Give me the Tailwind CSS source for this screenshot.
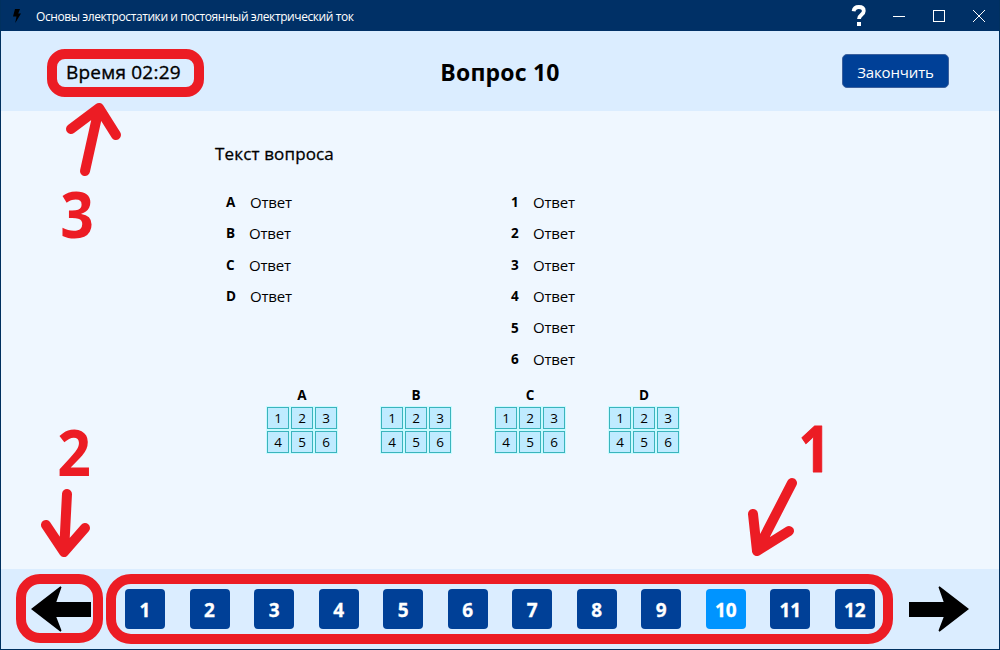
<!DOCTYPE html>
<html lang="ru">
<head>
<meta charset="utf-8">
<title>Основы электростатики и постоянный электрический ток</title>
<script src="https://cdn.jsdelivr.net/npm/@tailwindcss/browser@4"></script>
</head>
<body class="w-[1000px] h-[650px] overflow-hidden">
<div class="relative w-[1000px] h-[650px] flex flex-col bg-[#eff7ff] border-x border-b border-[#00305f] font-['Open_Sans','Noto_Sans',sans-serif] text-black">
  <header class="h-[31px] shrink-0 flex items-center bg-[#003066] text-white">
    <svg class="ml-[11px] mt-px w-[10px] h-[14px]" viewBox="0 0 10 14"><path d="M3 0h5L6.2 4.4H9L3.2 14 4.5 7.5H1z" fill="#000"/></svg>
    <h1 class="ml-[14px] mt-[2px] text-[12px] tracking-[-0.41px] whitespace-nowrap">Основы электростатики и постоянный электрический ток</h1>
    <div class="ml-auto flex items-center">
      <svg class="w-[16px] h-[22px] mr-[26px]" viewBox="0 0 16 22"><path d="M2.6 6.2C3 3.2 5 2 7.8 2c3 0 5 1.5 5 4 0 3.9-4.8 3.7-4.8 8" fill="none" stroke="#fff" stroke-width="3.8"/><rect x="6" y="17" width="4" height="4" fill="#fff"/></svg>
      <svg class="w-[12px] h-[12px] mr-[28px]" viewBox="0 0 12 12"><path d="M0 6.5h12" stroke="#fff"/></svg>
      <svg class="w-[12px] h-[12px] mr-[28px]" viewBox="0 0 12 12"><rect x=".5" y=".5" width="11" height="11" fill="none" stroke="#fff"/></svg>
      <svg class="w-[12px] h-[12px] mr-[14px]" viewBox="0 0 12 12"><path d="M0 0l12 12M12 0L0 12" stroke="#fff"/></svg>
    </div>
  </header>

  <section class="h-[80px] shrink-0 grid grid-cols-[1fr_auto_1fr] items-center bg-[#dbedff] px-[50px] pt-[1px]">
    <div class="pl-[15px] text-[19px] tracking-[0.22px] [-webkit-text-stroke:0.35px_black] whitespace-nowrap pt-px">Время 02:29</div>
    <h2 class="text-[23px] tracking-[0.2px] font-bold whitespace-nowrap pt-[2px]">Вопрос 10</h2>
    <button class="justify-self-end w-[107px] h-[34px] mb-px rounded-[5px] border border-[#3c609c] bg-[#004097] text-white text-[15px] tracking-[-0.15px] pt-[3px]">Закончить</button>
  </section>

  <main class="flex-1 flex flex-col">
    <h3 class="ml-[214px] mt-[30px] h-[26px] leading-[26px] text-[17px] tracking-[0.15px] [-webkit-text-stroke:0.3px_black] whitespace-nowrap">Текст вопроса</h3>
    <div class="ml-[225px] mt-[19.4px] grid grid-cols-[285px_auto] justify-start text-[15px]">
      <ul>
        <li class="h-[31.4px] flex items-center"><b class="text-[13.5px] w-[24px]">A</b><span class="tracking-[-0.2px]">Ответ</span></li>
        <li class="h-[31.4px] flex items-center"><b class="text-[13.5px] w-[23px]">B</b><span class="tracking-[-0.2px]">Ответ</span></li>
        <li class="h-[31.4px] flex items-center"><b class="text-[13.5px] w-[23px]">C</b><span class="tracking-[-0.2px]">Ответ</span></li>
        <li class="h-[31.4px] flex items-center"><b class="text-[13.5px] w-[24px]">D</b><span class="tracking-[-0.2px]">Ответ</span></li>
      </ul>
      <ul>
        <li class="h-[31.4px] flex items-center"><b class="text-[13.5px] w-[22px]">1</b><span class="tracking-[-0.2px]">Ответ</span></li>
        <li class="h-[31.4px] flex items-center"><b class="text-[13.5px] w-[22px]">2</b><span class="tracking-[-0.2px]">Ответ</span></li>
        <li class="h-[31.4px] flex items-center"><b class="text-[13.5px] w-[22px]">3</b><span class="tracking-[-0.2px]">Ответ</span></li>
        <li class="h-[31.4px] flex items-center"><b class="text-[13.5px] w-[22px]">4</b><span class="tracking-[-0.2px]">Ответ</span></li>
        <li class="h-[31.4px] flex items-center"><b class="text-[13.5px] w-[22px]">5</b><span class="tracking-[-0.2px]">Ответ</span></li>
        <li class="h-[31.4px] flex items-center"><b class="text-[13.5px] w-[22px]">6</b><span class="tracking-[-0.2px]">Ответ</span></li>
      </ul>
    </div>
    <div class="ml-[265px] mt-[11.2px] flex gap-[42px]" id="grids"></div>
  </main>

  <footer class="h-[80px] shrink-0 flex items-center bg-[#dbedff]">
    <svg class="ml-[29px] w-[62px] h-[48px]" viewBox="0 0 62 48"><path d="M1 24L30.5 1.2l1 1L26.3 17H61v15H26.3l5.2 13.5-1 1.3z" fill="#000"/></svg>
    <nav class="ml-[33px] w-[750px] flex justify-between text-white text-[19px] font-bold" id="nav"></nav>
    <svg class="ml-[33px] w-[62px] h-[48px]" viewBox="0 0 62 48"><path d="M61 24L31.5 1.2l-1 1L35.7 17H1v15h34.7l-5.2 13.5 1 1.3z" fill="#000"/></svg>
  </footer>

  <svg class="absolute -left-px top-0 w-[1000px] h-[650px] pointer-events-none" viewBox="0 0 1000 650" fill="none" stroke="#ec1c24" stroke-width="10" stroke-linecap="round" stroke-linejoin="round">
    <rect x="52" y="54" width="147" height="38" rx="13"/>
    <rect x="21" y="579" width="77" height="59" rx="19"/>
    <rect x="111" y="579" width="777" height="60" rx="20"/>
    <path d="M85 171L99 108M71 129L99 108L116 135"/>
    <path d="M67 494L64 552M46 525L64 552L85 528"/>
    <path d="M792 483L757 551M753 514L757 551L789 531"/>
    <g fill="#ec1c24" stroke="none" font-family="Open Sans, Noto Sans, sans-serif" font-weight="700" font-size="64" text-anchor="middle">
      <text transform="translate(77 238) scale(.92 1)">3</text>
      <text transform="translate(74 476) scale(.92 1)">2</text>
      <text transform="translate(814.5 472) scale(.88 1)" stroke="#ec1c24" stroke-width="1">1</text>
    </g>
  </svg>
</div>
<script>
document.getElementById('grids').innerHTML = ['A','B','C','D'].map(l =>
  `<div class="w-[72px] flex flex-col items-center"><b class="text-[13.5px] leading-[19px] mb-[2px]">${l}</b><div class="grid grid-cols-3 gap-[2px]">${[1,2,3,4,5,6].map(n =>
    `<span class="w-[22px] h-[22px] flex items-center justify-center border border-[#3ab4bd] bg-[#bfebff] text-[13.5px] leading-none pt-px shadow-[0_0_0_1px_#c9fbff]">${n}</span>`).join('')}</div></div>`).join('');
document.getElementById('nav').innerHTML = Array.from({length:12}, (_, i) =>
  `<button class="w-[40px] h-[40px] rounded-[4px] pt-[3px] [-webkit-text-stroke:0.3px_white] ${i === 9 ? 'bg-[#0094ff]' : 'bg-[#004097]'}">${i+1}</button>`).join('');
</script>
</body>
</html>
